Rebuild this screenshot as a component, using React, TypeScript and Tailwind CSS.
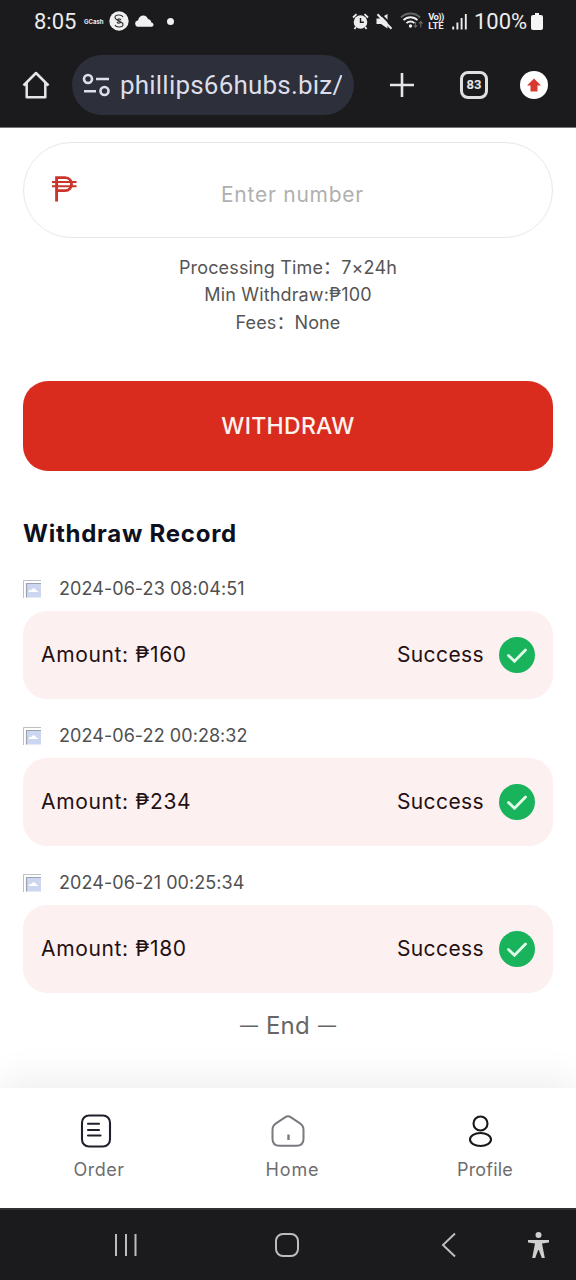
const records = [
  { date: "2024-06-23 08:04:51", amount: 160, status: "Success" },
  { date: "2024-06-22 00:28:32", amount: 234, status: "Success" },
  { date: "2024-06-21 00:25:34", amount: 180, status: "Success" },
];

export default function App() {
  return (
    <div className="flex h-[1280px] w-[576px] flex-col overflow-hidden bg-white font-['Inter','Noto_Sans_CJK_SC',sans-serif] whitespace-nowrap">
      <StatusBar />
      <BrowserBar />
      <main className="flex h-[960px] flex-col px-[23px] pt-[14px]">
        <div className="flex h-24 shrink-0 items-center rounded-full border border-[#e9e8e8] pr-[27px] pb-[2px] pl-[27px]">
          <PesoIcon />
          <span className="ml-[143px] pt-[11px] text-[21px] tracking-[0.75px] text-[#b0b0b0]">
            Enter number
          </span>
        </div>
        <div className="mt-4 flex flex-col items-center text-[18px] leading-[27.5px] text-[#555]">
          <p className="tracking-[0.15px]">Processing Time：7×24h</p>
          <p className="-mt-px mb-px tracking-[0.15px]">Min Withdraw:₱100</p>
          <p className="tracking-[0.1px]">Fees：None</p>
        </div>
        <button className="mt-[44px] h-[90px] shrink-0 rounded-[25px] bg-[#d92c1f] pt-[2px] text-[23px] font-medium tracking-[0.3px] text-[#fff3ee]">
          WITHDRAW
        </button>
        <h2 className="mt-[47px] text-2xl font-bold tracking-[0.75px] text-[#0d1020]">
          Withdraw Record
        </h2>
        <ul className="mt-[13px] flex flex-col gap-[11px]">
          {records.map((record) => (
            <Record key={record.date} {...record} />
          ))}
        </ul>
        <p className="mt-[15px] flex items-center justify-center gap-[8px] text-[#666]">
          <span className="text-[18px]">—</span>
          <span className="text-[24px] leading-9 tracking-[0.3px]">End</span>
          <span className="text-[18px]">—</span>
        </p>
      </main>
      <TabBar />
      <SystemNav />
    </div>
  );
}

function StatusBar() {
  return (
    <div className="flex h-[42px] shrink-0 items-center bg-[#1b1b1d] pl-[34px] font-[Roboto,sans-serif] text-[#ececec]">
      <span className="w-[44px] text-[22px]">8:05</span>
      <span className="ml-[6px] w-5 font-['Inter',sans-serif] text-[6px] font-bold">
        GCash
      </span>
      <svg className="ml-[5px]" width="20" height="20" viewBox="0 0 20 20">
        <circle cx="10" cy="10" r="9.7" fill="#f0f0f0" />
        <path
          d="M14 6.2C13 3.2 6 3.4 6 6.6c0 3 5.500 2.500 5.500 4.400 0 1.500-3 1.500-3.500 0M6 13.800c1 3 8 2.800 8-.400 0-3-5.500-2.500-5.500-4.400 0-1.500 3-1.500 3.500 0"
          fill="none"
          stroke="#333"
          strokeWidth="1.100"
        />
      </svg>
      <svg className="ml-[5px]" width="20" height="12" viewBox="0 0 20 12">
        <path
          d="M3.500 11.700a3.200 3.200 0 0 1 0-6.200h.500C4.800 2.300 6.800.500 9.300.500c2.400 0 4 1.500 4.700 3.600 2 .200 3.300 1.700 3.300 3.400 1.300.200 2.200 1.100 2.200 2.200 0 1-.800 2-2 2z"
          fill="#f0f0f0"
        />
      </svg>
      <span className="ml-[13px] size-[7px] rounded-full bg-[#f0f0f0]" />
      <svg className="ml-[178px]" width="17" height="17" viewBox="0 0 17 17">
        <path d="M1 4.500 4.500 1.200M16 4.500l-3.500-3.300M3.800 14 2.500 16M13.200 14l1.300 2" stroke="#ececec" strokeWidth="1.800" />
        <circle cx="8.500" cy="9" r="6.800" fill="#ececec" />
        <path d="M8.500 5v4.300h3.300" fill="none" stroke="#1b1b1d" strokeWidth="1.400" />
      </svg>
      <svg className="ml-[7px]" width="17" height="17" viewBox="0 0 17 17">
        <path d="M.500 5.500h3L11.500 1v14.500L5 11H.500z" fill="#ececec" />
        <path d="M4 .500 16.500 13" stroke="#1b1b1d" strokeWidth="2" />
        <path d="M1.500 1.200 15.500 15.800" stroke="#ececec" strokeWidth="2" />
      </svg>
      <svg className="ml-[7px]" width="24" height="18" viewBox="0 0 24 18">
        <g fill="none" strokeWidth="1.900">
          <path d="M1 5.500C6 .200 15 .200 20 5.500" stroke="#666" />
          <path d="M3.500 8.200c4-4 10-4 14 0" stroke="#ececec" />
          <path d="M6.500 11.200c2.300-2.300 5.700-2.300 8 0" stroke="#ececec" />
        </g>
        <circle cx="10.500" cy="14" r="1.700" fill="#ececec" />
        <path d="M15.500 10v5M13.800 13.400l1.700 1.800 1.700-1.800M20.800 15.500V9.800M19 11.500l1.800-1.800 1.800 1.800" fill="none" stroke="#666" strokeWidth="1.200" />
      </svg>
      <span className="ml-[3px] flex w-[18px] flex-col items-center text-[9.5px] leading-[9px] font-bold">
        <span className="tracking-[-0.6px]">Vo))</span>
        <span>LTE</span>
      </span>
      <svg className="ml-[7px]" width="15" height="17" viewBox="0 0 15 17">
        <path d="M1.200 13.500v3M5.400 9.500v7M9.600 5v11.500M13.800 1v15.500" stroke="#ececec" strokeWidth="1.900" />
      </svg>
      <span className="ml-[7px] w-[55px] text-[22px]">100%</span>
      <svg className="ml-[2px]" width="12" height="17" viewBox="0 0 12 17">
        <path d="M4 0h4v2h2a2 2 0 0 1 2 2v11a2 2 0 0 1-2 2H2a2 2 0 0 1-2-2V4a2 2 0 0 1 2-2h2z" fill="#f5f5f5" />
      </svg>
    </div>
  );
}

function BrowserBar() {
  return (
    <div className="flex h-[86px] shrink-0 items-center border-b border-[#777] bg-[#1b1b1d] pl-[22px]">
      <svg width="28" height="28" viewBox="0 0 28 28" fill="none" stroke="#e7e5e8" strokeWidth="2.500">
        <path d="M1.500 14.500 14 2l12.500 12.500M4.700 11.500v14.800h18.600V11.500" strokeLinejoin="round" />
      </svg>
      <div className="ml-[22px] flex h-[60px] w-[282px] items-center rounded-full bg-[#2d2f3a] pl-[10px]">
        <svg width="29" height="24" viewBox="0 0 29 24" fill="none" stroke="#dedfe8" strokeWidth="2.600">
          <circle cx="6" cy="6" r="4" />
          <path d="M14 6h13M2 18.200h12" />
          <circle cx="22.500" cy="18" r="4" />
        </svg>
        <span className="ml-[9px] w-[222px] overflow-hidden pt-px font-[Roboto,sans-serif] text-[26px] tracking-[0.200px] text-[#dcdde8]">
          phillips66hubs.biz/
        </span>
      </div>
      <svg className="ml-9" width="24" height="24" viewBox="0 0 24 24" stroke="#e7e5e8" strokeWidth="2.600">
        <path d="M12 0v24M0 12h24" />
      </svg>
      <span className="ml-[46px] flex h-7 w-[28px] items-center justify-center rounded-[8px] border-[3px] border-[#e0dfe2] font-[Roboto,sans-serif] text-[13px] font-bold text-[#e7e5e8]">
        83
      </span>
      <span className="ml-8 flex size-[28px] items-center justify-center rounded-full bg-white">
        <svg width="14" height="14" viewBox="0 0 14 14" fill="#d83b2e">
          <path d="M7 .500 14 7.500H10.500v6h-7v-6H0z" />
        </svg>
      </span>
    </div>
  );
}

function PesoIcon() {
  return (
    <svg width="27" height="28" viewBox="0 0 28 28" fill="none" stroke="#c9342b">
      <path d="M5.800 27V2.200h8.700c9 0 9 13.500 0 13.500H6" strokeWidth="3" />
      <path d="M1 6.800h25.500M1 11.200h25.500" strokeWidth="2.200" />
    </svg>
  );
}

function Record({
  date,
  amount,
  status,
}: {
  date: string;
  amount: number;
  status: string;
}) {
  return (
    <li className="flex flex-col">
      <div className="flex h-12 items-center pt-[3px]">
        <BrokenImage />
        <span className="ml-[18px] text-[18px] tracking-[0.06px] text-[#505050]">
          {date}
        </span>
      </div>
      <div className="flex h-[88px] items-center rounded-3xl bg-[#fdf0f0] pr-[18px] pl-[18px] text-[21px] text-[#231012]">
        <span className="tracking-[0.65px]">Amount: ₱{amount}</span>
        <span className="ml-auto tracking-[0.4px]">{status}</span>
        <svg className="ml-[15px]" width="36" height="36" viewBox="0 0 36 36" fill="none">
          <circle cx="18" cy="18" r="18" fill="#18b35b" />
          <path d="m9.500 18.500 6 5.800L26.500 13" stroke="#e0fbe9" strokeWidth="2.800" strokeLinecap="round" />
        </svg>
      </div>
    </li>
  );
}

function BrokenImage() {
  return (
    <svg className="mt-[2px]" width="18" height="18" viewBox="0 0 18 18">
      <path d="M.500 18V.500H18" fill="none" stroke="#bdc0c6" />
      <rect x="3" y="3" width="15" height="14.500" fill="#ccd6f0" />
      <path d="M3.500 17.500v-14H18" fill="none" stroke="#9ba2b0" strokeWidth="1.200" />
      <path d="M5.500 12c.500-2 2-2.500 3-2 1-2.500 4-2 4.300.200 1.500 0 2.200.800 2.200 1.800z" fill="#fff" />
    </svg>
  );
}

function TabBar() {
  return (
    <nav className="flex h-[120px] shrink-0 bg-white pt-[25px] text-[18px] text-[#6e6e6e] shadow-[0_-6px_40px_rgba(0,0,0,0.080)]">
      <div className="flex w-48 flex-col items-center">
        <svg width="36" height="36" viewBox="0 0 36 36" fill="none" stroke="#20202c" strokeWidth="2.100" strokeLinecap="round">
          <rect x="4" y="2.500" width="28" height="31" rx="7" />
          <path d="M10 10.800h11M10 17h11M10 22.500h12.500" />
        </svg>
        <span className="mt-[7px] ml-[6px] tracking-[0.5px]">Order</span>
      </div>
      <div className="flex w-48 flex-col items-center">
        <svg width="36" height="36" viewBox="0 0 36 36" fill="none" stroke="#777a7e" strokeWidth="2" strokeLinecap="round">
          <path d="M15 4.300q3-1.900 6 0l9 6q3.500 2.300 3.500 6.500v9q0 7-7 7h-17q-7 0-7-7v-9q0-4.200 3.500-6.500z" />
          <path d="M18.500 21.500v5.500" strokeLinecap="butt" strokeWidth="2.400" />
        </svg>
        <span className="mt-[7px] ml-[9px] tracking-[0.9px]">Home</span>
      </div>
      <div className="flex w-48 flex-col items-center">
        <svg width="36" height="36" viewBox="0 0 36 36" fill="none" stroke="#18181b" strokeWidth="2.100">
          <circle cx="18.500" cy="10.500" r="7" />
          <ellipse cx="18.500" cy="26.500" rx="10.500" ry="6.500" />
        </svg>
        <span className="mt-[7px] ml-[10px] tracking-[0.2px]">Profile</span>
      </div>
    </nav>
  );
}

function SystemNav() {
  return (
    <div className="flex h-[72px] shrink-0 items-center border-t-2 border-[#303033] bg-[#1b1b1d] pl-[114px]">
      <svg width="24" height="24" viewBox="0 0 24 24" stroke="#bdbdbd" strokeWidth="2">
        <path d="M2 1v22M12 1v22M21.500 1v22" />
      </svg>
      <span className="ml-[137px] size-6 rounded-[8px] border-2 border-[#bdbdbd]" />
      <svg className="ml-[142px]" width="16" height="26" viewBox="0 0 16 26" fill="none" stroke="#bdbdbd" strokeWidth="2">
        <path d="M14 1.500 2 13l12 11.500" />
      </svg>
      <svg className="ml-[71px]" width="21" height="26" viewBox="0 0 21 26" fill="#cfcfcf">
        <circle cx="10.500" cy="3" r="3" />
        <path d="M0 8h21v2.500l-7 1L16.800 26h-3L10.800 18h-.600L7.200 26h-3L7 11.500l-7-1z" />
      </svg>
    </div>
  );
}
